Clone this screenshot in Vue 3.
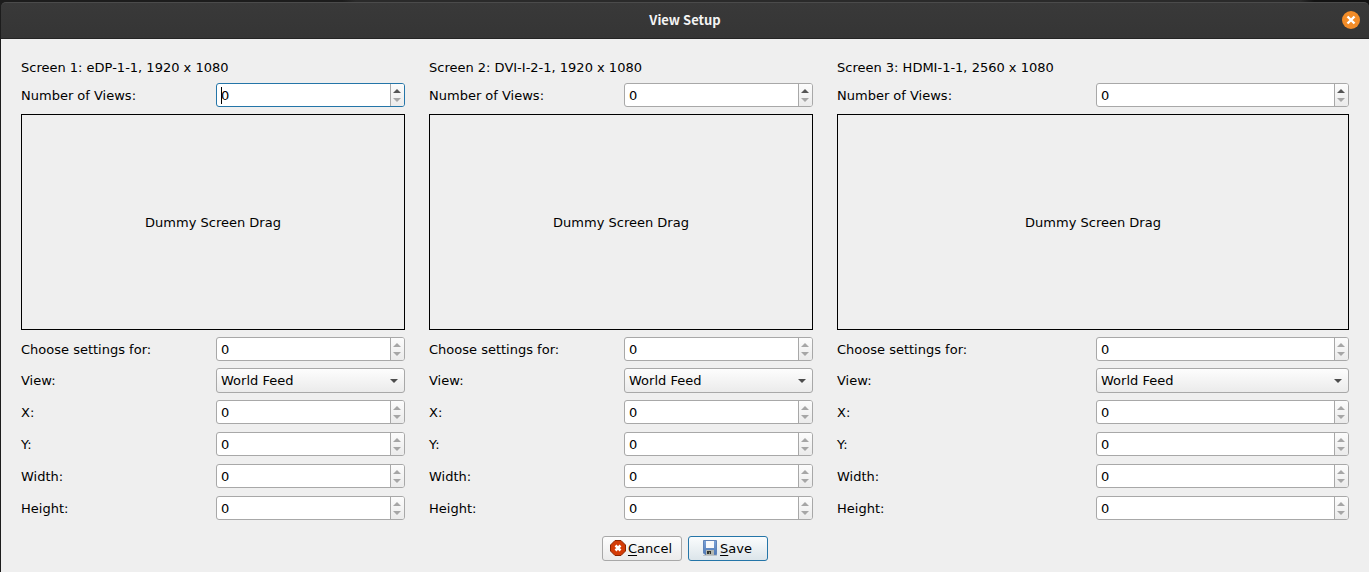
<script setup>
import { reactive } from 'vue'

const fields = [
  { key: 'target', label: 'Choose settings for:' },
  { key: 'view', label: 'View:' },
  { key: 'x', label: 'X:' },
  { key: 'y', label: 'Y:' },
  { key: 'width', label: 'Width:' },
  { key: 'height', label: 'Height:' },
]

const makeScreen = (id, output, width, height) => ({
  id, output, width, height,
  count: 0,
  settings: { target: 0, view: 'World Feed', x: 0, y: 0, width: 0, height: 0 },
})

const screens = reactive([
  makeScreen(1, 'eDP-1-1', 1920, 1080),
  makeScreen(2, 'DVI-I-2-1', 1920, 1080),
  makeScreen(3, 'HDMI-1-1', 2560, 1080),
])
</script>

<template>
  <div class="window">
    <header class="titlebar">
      <h1>View Setup</h1>
      <button class="close" type="button" aria-label="Close">
        <svg width="18" height="18" viewBox="0 0 18 18">
          <circle cx="9" cy="9" r="9" fill="#f28c28" />
          <path d="M5.500 5.500L12.500 12.500M12.500 5.500L5.500 12.500" stroke="#fff" stroke-width="2.400" />
        </svg>
      </button>
    </header>

    <form class="body" @submit.prevent>
      <div class="screens">
        <section v-for="s in screens" :key="s.id" class="screen">
          <h2>Screen {{ s.id }}: {{ s.output }}, {{ s.width }} x {{ s.height }}</h2>

          <div class="row">
            <label :for="`count-${s.id}`">Number of Views:</label>
            <div class="spin" :class="{ active: s.id === 1 }">
              <input :id="`count-${s.id}`" v-model.number="s.count" type="number" min="0" />
              <div class="steps">
                <button class="up" type="button" aria-label="Increase" @click="s.count++">
                  <svg width="8" height="4" viewBox="0 0 8 4"><path d="M0 4L4 0L8 4Z" /></svg>
                </button>
                <button class="down" type="button" aria-label="Decrease" :disabled="s.count === 0" @click="s.count--">
                  <svg width="8" height="4" viewBox="0 0 8 4"><path d="M0 0L4 4L8 0Z" /></svg>
                </button>
              </div>
            </div>
          </div>

          <div class="preview" :style="{ aspectRatio: `${s.width} / ${s.height}` }">Dummy Screen Drag</div>

          <div class="settings">
            <div v-for="f in fields" :key="f.key" class="row">
              <label :for="`${f.key}-${s.id}`">{{ f.label }}</label>
              <div v-if="f.key === 'view'" class="combo">
                <select :id="`view-${s.id}`" v-model="s.settings.view">
                  <option>World Feed</option>
                </select>
                <svg width="8" height="4" viewBox="0 0 8 4"><path d="M0 0L4 4L8 0Z" /></svg>
              </div>
              <div v-else class="spin">
                <input :id="`${f.key}-${s.id}`" v-model.number="s.settings[f.key]" type="number" min="0" max="0" />
                <div class="steps">
                  <button class="up" type="button" aria-label="Increase" disabled>
                    <svg width="8" height="4" viewBox="0 0 8 4"><path d="M0 4L4 0L8 4Z" /></svg>
                  </button>
                  <button class="down" type="button" aria-label="Decrease" disabled>
                    <svg width="8" height="4" viewBox="0 0 8 4"><path d="M0 0L4 4L8 0Z" /></svg>
                  </button>
                </div>
              </div>
            </div>
          </div>
        </section>
      </div>

      <footer class="actions">
        <button class="action" type="button">
          <svg width="16" height="16" viewBox="0 0 16 16">
            <path d="M5 .5H11L15.500 5V11L11 15.500H5L.5 11V5Z" fill="#d43c06" stroke="#8a2400" />
            <path d="M5.500 5.500L10.500 10.500M10.500 5.500L5.500 10.500" stroke="#fff" stroke-width="2.500" />
          </svg>
          <span><u>C</u>ancel</span>
        </button>
        <button class="action primary" type="submit">
          <svg width="16" height="16" viewBox="0 0 16 16">
            <defs>
              <linearGradient id="disk" x1="0" y1="0" x2="0" y2="1">
                <stop offset="0" stop-color="#7ba3da" />
                <stop offset="1" stop-color="#4f79b5" />
              </linearGradient>
            </defs>
            <path d="M1.500 .5H14.500V14.500H3L1.500 13Z" fill="url(#disk)" stroke="#5f83b8" />
            <path d="M4 1H12V8H4Z" fill="#f8f9fb" />
            <path d="M4 10H12V15H4Z" fill="#b4b7b0" />
            <path d="M5 11H9V14H5Z" fill="#30332f" />
            <path d="M7 12H8V14H7Z" fill="#8b8f72" />
            <path d="M1 15H15V16H1Z" fill="#9a9d9f" opacity=".5" />
          </svg>
          <span><u>S</u>ave</span>
        </button>
      </footer>
    </form>
  </div>
</template>

<style>
html {
  background: #efefef;
}
body {
  margin: 0;
}
</style>

<style scoped>
.window {
  box-sizing: border-box;
  min-height: 100vh;
  padding: 2px 0 0 1px;
  display: flex;
  flex-direction: column;
  background: linear-gradient(90deg, #1c1c1c 25%, #2a2a2a 26%, #2a2a2a 95%, #121212 96%);
  color: #000;
  font: 13px/16px "DejaVu Sans", sans-serif;
}
.titlebar {
  box-sizing: border-box;
  height: 37px;
  padding: 0 9px 2px;
  display: grid;
  grid-template-columns: 1fr auto 1fr;
  align-items: center;
  border-top: 1px solid #4b4b4b;
  border-bottom: 1px solid #242424;
  border-radius: 5px 5px 0 0;
  background: linear-gradient(#393939, #353535);
}
h1 {
  grid-column: 2;
  margin: 0;
  color: #f4f4f4;
  font: bold 13px/20px "Noto Sans CJK SC", sans-serif;
}
.close {
  justify-self: end;
  display: flex;
  padding: 0;
  border: 0;
  border-radius: 50%;
  background: none;
}
.body {
  flex: 1;
  padding: 21px 20px 11px;
  background: #efefef;
}
.screens {
  display: grid;
  grid-template-columns: 3fr 3fr 4fr;
  gap: 24px;
}
.screen {
  display: flex;
  flex-direction: column;
  gap: 7px;
}
h2 {
  margin: 0;
  font: inherit;
}
.row {
  display: grid;
  grid-template-columns: 1fr 1fr;
  column-gap: 6px;
  align-items: start;
}
.row label {
  height: 24px;
  line-height: 26px;
}
.preview {
  box-sizing: border-box;
  display: flex;
  align-items: center;
  justify-content: center;
  padding-top: 2px;
  border: 1px solid #000;
}
.settings {
  display: grid;
  grid-template-rows: 24px;
  grid-auto-rows: 25px;
  row-gap: 7px;
}
.spin {
  position: relative;
  box-sizing: border-box;
  height: 24px;
  display: flex;
  overflow: hidden;
  border: 1px solid #a8a8a8;
  border-radius: 3px;
  background: #fff;
}
.spin.active {
  border-color: #2475a8;
}
.spin.active::before {
  content: "";
  position: absolute;
  top: 3px;
  left: 4px;
  width: 1px;
  height: 17px;
  background: #000;
}
.spin input {
  flex: 1;
  min-width: 0;
  padding: 2px 4px 0;
  border: 0;
  outline: 0;
  background: none;
  color: inherit;
  font: inherit;
  appearance: textfield;
}
.spin input::-webkit-inner-spin-button {
  appearance: none;
  margin: 0;
}
.steps {
  width: 12px;
  padding-right: 1px;
  display: grid;
  grid-template-rows: 1fr 1fr;
  border-left: 1px solid #a8a8a8;
  background: linear-gradient(#fcfcfc, #ebebeb);
}
.steps button {
  display: flex;
  justify-content: center;
  padding: 0;
  border: 0;
  background: none;
  color: #555;
}
.steps button:disabled {
  color: #a6a6a6;
}
.steps .up {
  align-items: flex-end;
  padding-bottom: 2px;
}
.steps .down {
  align-items: flex-start;
  padding-top: 3px;
}
.steps path,
.combo path {
  fill: currentColor;
}
.combo {
  display: grid;
  align-items: center;
  color: #4d4d4d;
}
.combo > * {
  grid-area: 1 / 1;
}
.combo svg {
  justify-self: end;
  margin-right: 7px;
  pointer-events: none;
}
select {
  box-sizing: border-box;
  width: 100%;
  height: 25px;
  padding: 0 20px 0 4px;
  appearance: none;
  border: 1px solid #a8a8a8;
  border-radius: 3px;
  background: linear-gradient(#fdfdfd, #ebebeb);
  color: #000;
  font: inherit;
}
.actions {
  margin-top: 15px;
  display: flex;
  justify-content: center;
  gap: 6px;
}
.action {
  box-sizing: border-box;
  width: 80px;
  height: 25px;
  padding: 0 2px 0 0;
  display: flex;
  align-items: center;
  justify-content: center;
  gap: 2px;
  border: 1px solid #a8a8a8;
  border-radius: 3px;
  background: linear-gradient(#fdfdfd, #ebebeb);
  color: #000;
  font: inherit;
}
.action svg {
  margin-bottom: 1px;
}
.primary {
  border-color: #2475a8;
  background: linear-gradient(#fafcfd, #dce5ea);
}
u {
  text-underline-offset: 2px;
}
</style>
